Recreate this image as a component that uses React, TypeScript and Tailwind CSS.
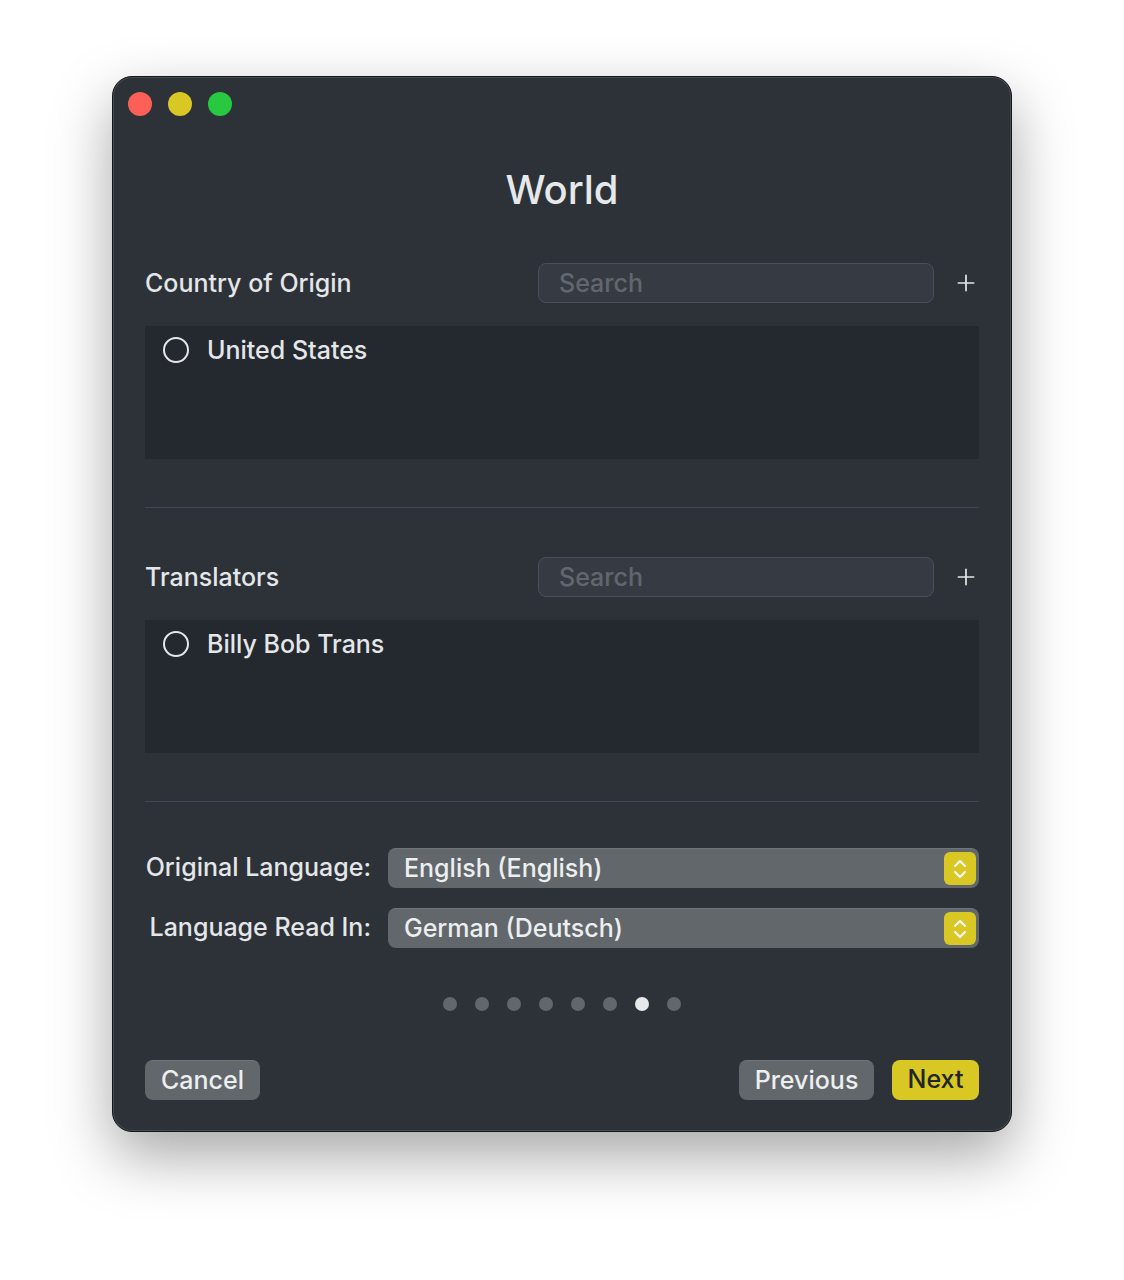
import { Plus } from 'lucide-react';

const font = { fontFamily: 'Inter, "Noto Sans", sans-serif' };

function SearchRow({ label }: { label: string }) {
  return (
    <div className="flex items-center h-10">
      <span className="flex-1 text-[25px] font-medium text-[#e4e6e8] pt-[2px]">{label}</span>
      <div className="w-[396px] h-10 rounded-[8px] bg-[#363b43] border border-[#4b5058] flex items-center pl-[20px]">
        <span className="text-[25px] font-medium text-[#62676e] pt-[2px]">Search</span>
      </div>
      <div className="w-[45px] flex justify-end">
        <Plus className="w-[26px] h-[26px] text-[#e4e6e8]" strokeWidth={1.6} />
      </div>
    </div>
  );
}

function ListBox({ item }: { item: string }) {
  return (
    <div className="mt-[23px] h-[133px] bg-[#242930] pl-[18px] pt-[11px]">
      <div className="flex items-center gap-[18px] h-[26px]">
        <span className="w-[26px] h-[26px] rounded-full border-2 border-[#e4e6e8]" />
        <span className="text-[25px] font-medium leading-[26px] text-[#e4e6e8]">{item}</span>
      </div>
    </div>
  );
}

function SelectRow({ label, value }: { label: string; value: string }) {
  return (
    <div className="flex items-center h-10">
      <span className="w-[226px] text-right text-[25px] font-medium text-[#e4e6e8]">{label}</span>
      <div className="ml-[17px] flex-1 h-10 rounded-[8px] bg-[#62676b] border-t border-[#70757a] flex items-center pl-[16px] pr-[3px]">
        <span className="flex-1 text-[25px] font-medium text-[#eceef0]">{value}</span>
        <div className="w-[32px] h-[33px] rounded-[6px] bg-[#d9c723] flex items-center justify-center">
          <svg width="16" height="24" viewBox="0 0 16 24" fill="none" stroke="#f4f4f4" strokeWidth="2.2" strokeLinecap="round" strokeLinejoin="round">
            <path d="M3 9 L8 4 L13 9" />
            <path d="M3 15 L8 20 L13 15" />
          </svg>
        </div>
      </div>
    </div>
  );
}

export default function App() {
  const dots = [0, 1, 2, 3, 4, 5, 6, 7];
  return (
    <div className="min-h-[1280px] bg-white pt-[76px]" style={font}>
      <div className="mx-auto w-[900px] h-[1056px] rounded-[20px] bg-[#2d3239] border border-[#15171a] shadow-[0_24px_60px_rgba(0,0,0,0.35),inset_0_0_0_1px_rgba(255,255,255,0.12)]">
        {/* Title bar */}
        <div className="flex gap-[16px] pt-[15px] pl-[15px]">
          <span className="w-6 h-6 rounded-full bg-[#fe5f57]" />
          <span className="w-6 h-6 rounded-full bg-[#d9c723]" />
          <span className="w-6 h-6 rounded-full bg-[#28c840]" />
        </div>

        <div className="px-[32px]">
          <h1 className="mt-[48px] text-center text-[40px] font-medium leading-[52px] text-[#e6e8ea]">World</h1>

          <div className="mt-[47px]">
            <SearchRow label="Country of Origin" />
            <ListBox item="United States" />
          </div>

          <div className="mt-[48px] h-px bg-[#434850]" />

          <div className="mt-[49px]">
            <SearchRow label="Translators" />
            <ListBox item="Billy Bob Trans" />
          </div>

          <div className="mt-[48px] h-px bg-[#434850]" />

          <div className="mt-[46px] flex flex-col gap-[20px]">
            <SelectRow label="Original Language:" value="English (English)" />
            <SelectRow label="Language Read In:" value="German (Deutsch)" />
          </div>

          <div className="mt-[49px] flex justify-center gap-[18px]">
            {dots.map((d) => (
              <span key={d} className={d === 6 ? 'w-[14px] h-[14px] rounded-full bg-[#e6e8ea]' : 'w-[14px] h-[14px] rounded-full bg-[#62676b]'} />
            ))}
          </div>

          <div className="mt-[49px] flex items-center">
            <button className="w-[115px] h-10 rounded-[8px] bg-[#62676b] border-t border-[#70757a] text-[25px] font-medium text-[#eceef0]">Cancel</button>
            <div className="flex-1" />
            <button className="w-[135px] h-10 rounded-[8px] bg-[#62676b] border-t border-[#70757a] text-[25px] font-medium text-[#eceef0]">Previous</button>
            <button className="ml-[18px] w-[87px] h-10 rounded-[8px] bg-[#d9c723] text-[25px] font-medium text-[#22252a]">Next</button>
          </div>
        </div>
      </div>
    </div>
  );
}
